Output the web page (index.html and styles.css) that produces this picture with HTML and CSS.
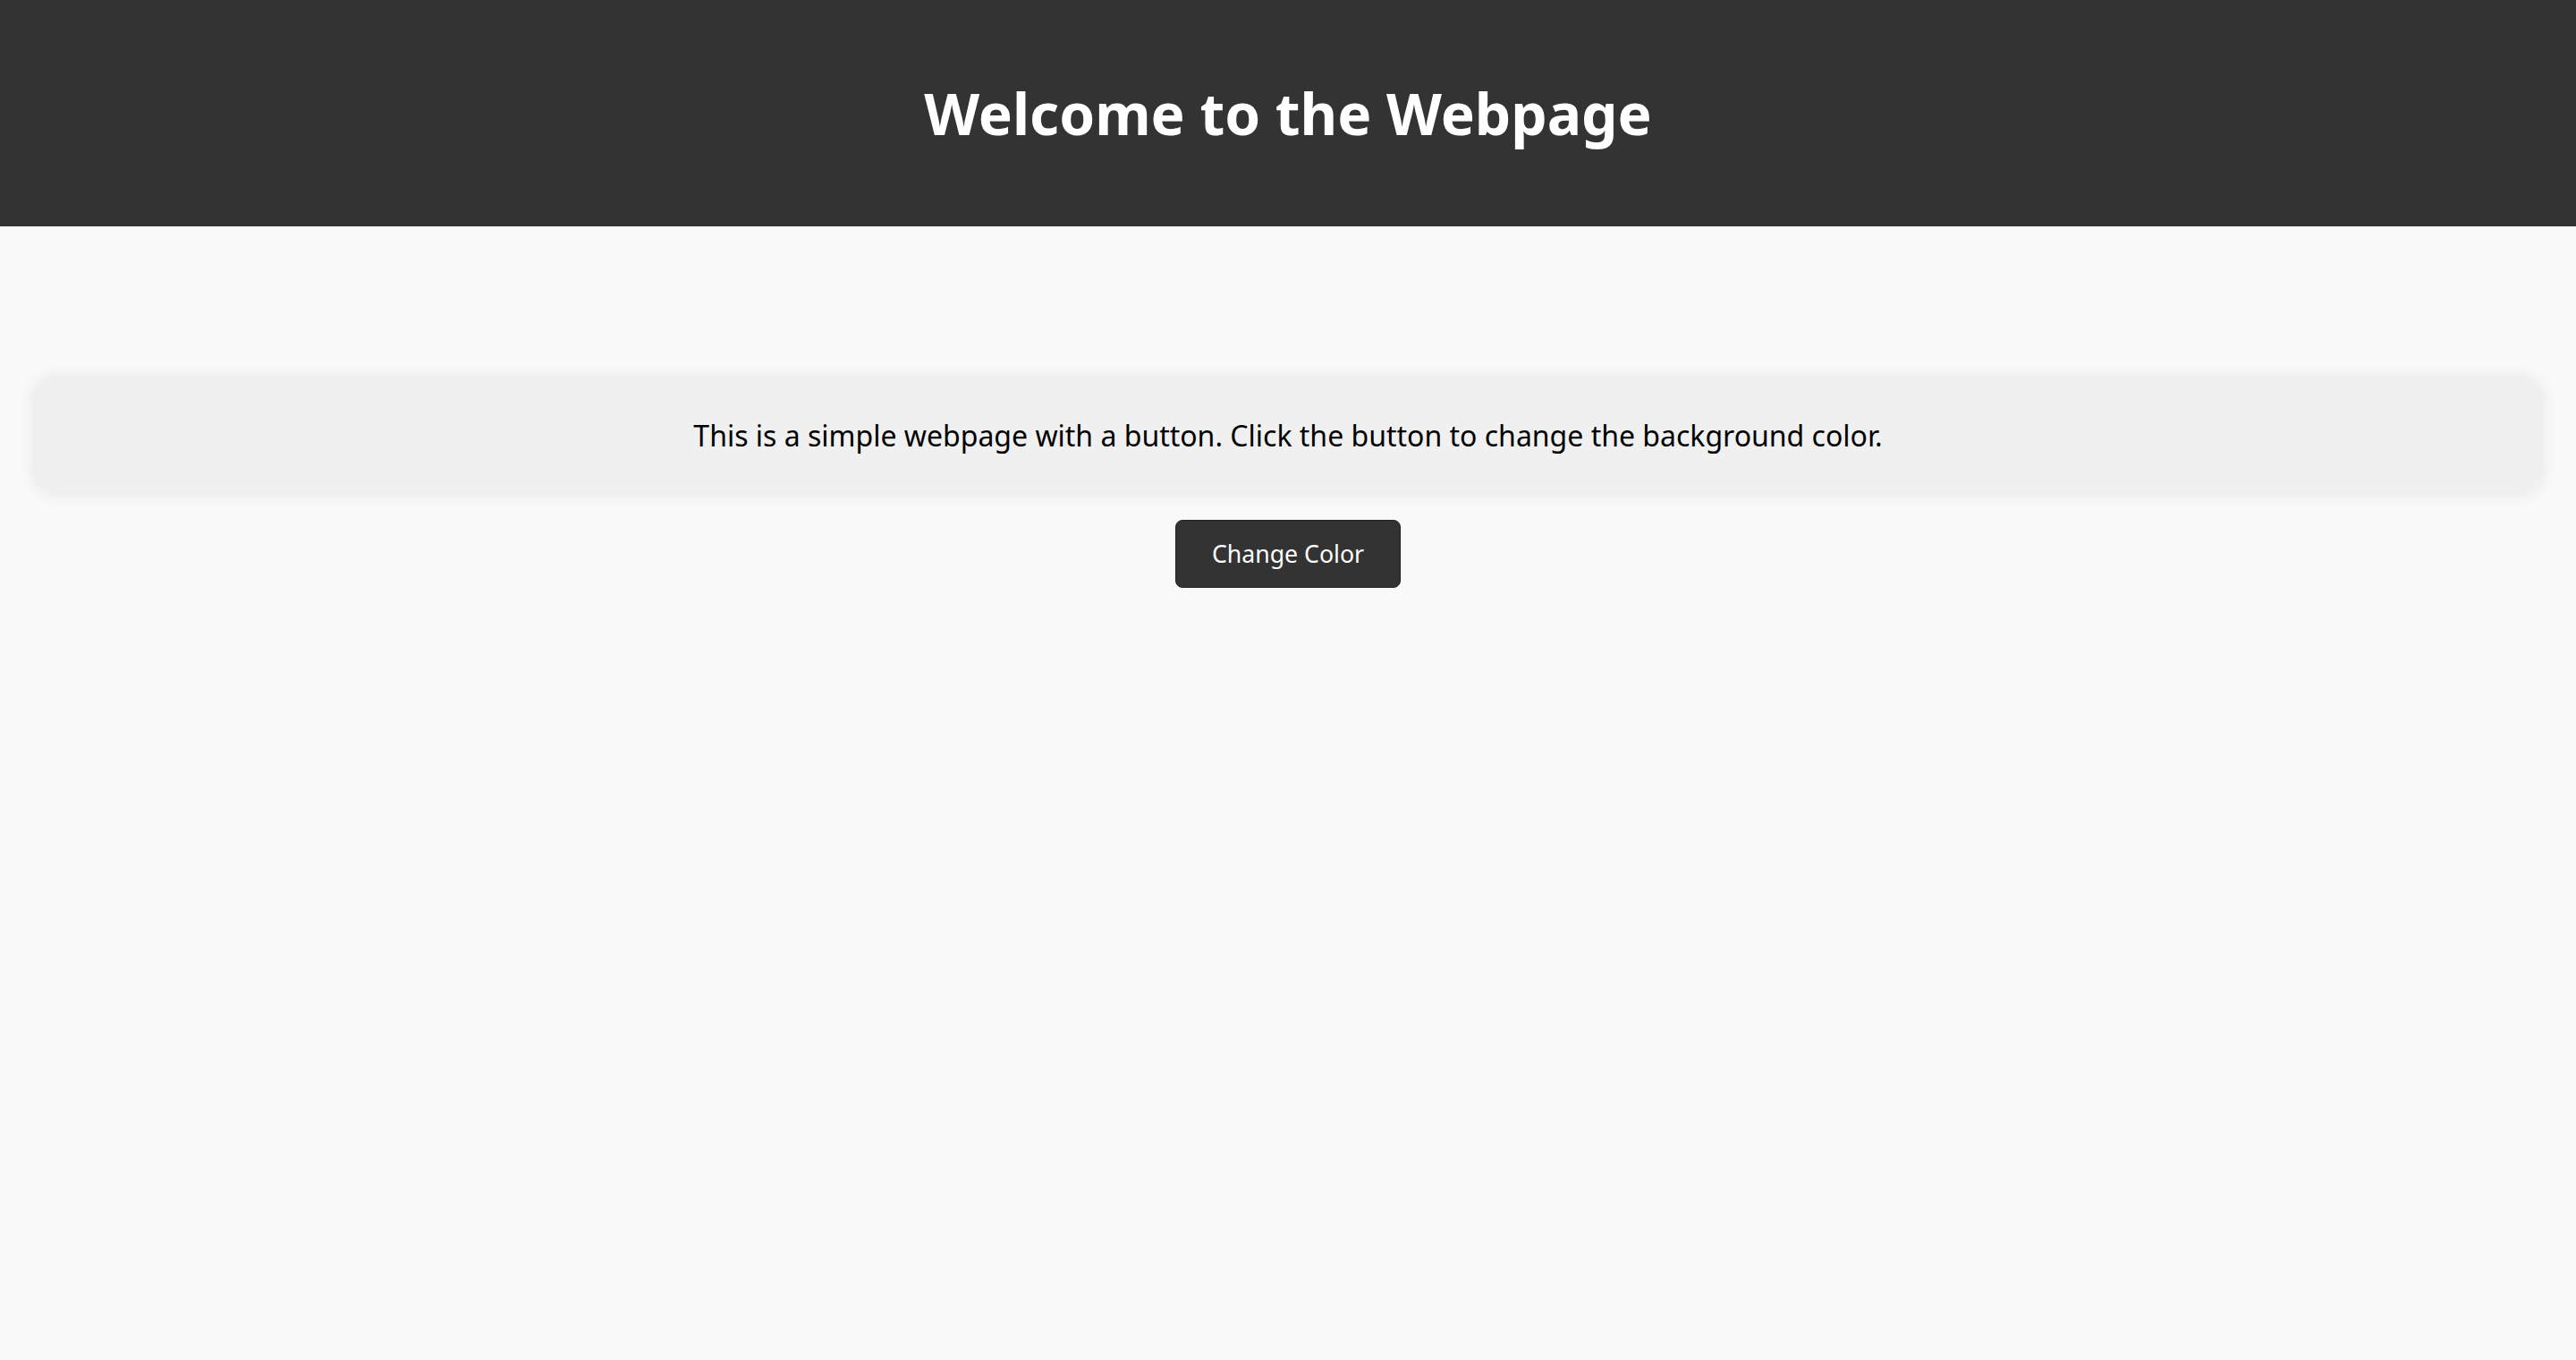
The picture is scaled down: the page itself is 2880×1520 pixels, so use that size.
FILE: index.html
```html
<!DOCTYPE html>
<html lang="en">
<head>
<meta charset="utf-8">
<title>Welcome to the Webpage</title>
<link rel="stylesheet" href="styles.css">
</head>
<body>
<header class="site-header">
  <h1 class="site-title">Welcome to the Webpage</h1>
</header>
<main class="main">
  <section class="card">
    <p class="card-text">This is a simple webpage with a button. Click the button to change the background color.</p>
  </section>
  <div class="actions">
    <button class="btn" type="button">Change Color</button>
  </div>
</main>
</body>
</html>
```

FILE: styles.css
```css
html, body {
  margin: 0;
  padding: 0;
}
body {
  background: #f9f9f9;
  color: #000;
  font-family: "Noto Sans", "Open Sans", sans-serif;
  min-height: 1520px;
}
.site-header {
  background: #333333;
  color: #ffffff;
  padding: 40px;
  text-align: center;
}
.site-title {
  margin: 43px 0;
  font-size: 64px;
  font-weight: 700;
  line-height: 87px;
}
.main {
  padding: 171px 40px 40px;
  display: flex;
  flex-direction: column;
  align-items: center;
}
.card {
  align-self: stretch;
  background: #f0f0f0;
  border-radius: 20px;
  box-shadow: 0 0 20px rgba(0, 0, 0, 0.1);
  padding: 40px;
  text-align: center;
  height: 125px;
  box-sizing: border-box;
  display: flex;
  align-items: center;
  justify-content: center;
}
.card-text {
  margin: 0;
  font-size: 32px;
  line-height: 44px;
}
.actions {
  margin-top: 32px;
}
.btn {
  font-family: "Noto Sans", "Open Sans", sans-serif;
  font-size: 26.67px;
  line-height: 36px;
  color: #ffffff;
  background: #333333;
  border: 1px solid #222222;
  border-radius: 8px;
  padding: 19px 40px;
  cursor: pointer;
}
```
